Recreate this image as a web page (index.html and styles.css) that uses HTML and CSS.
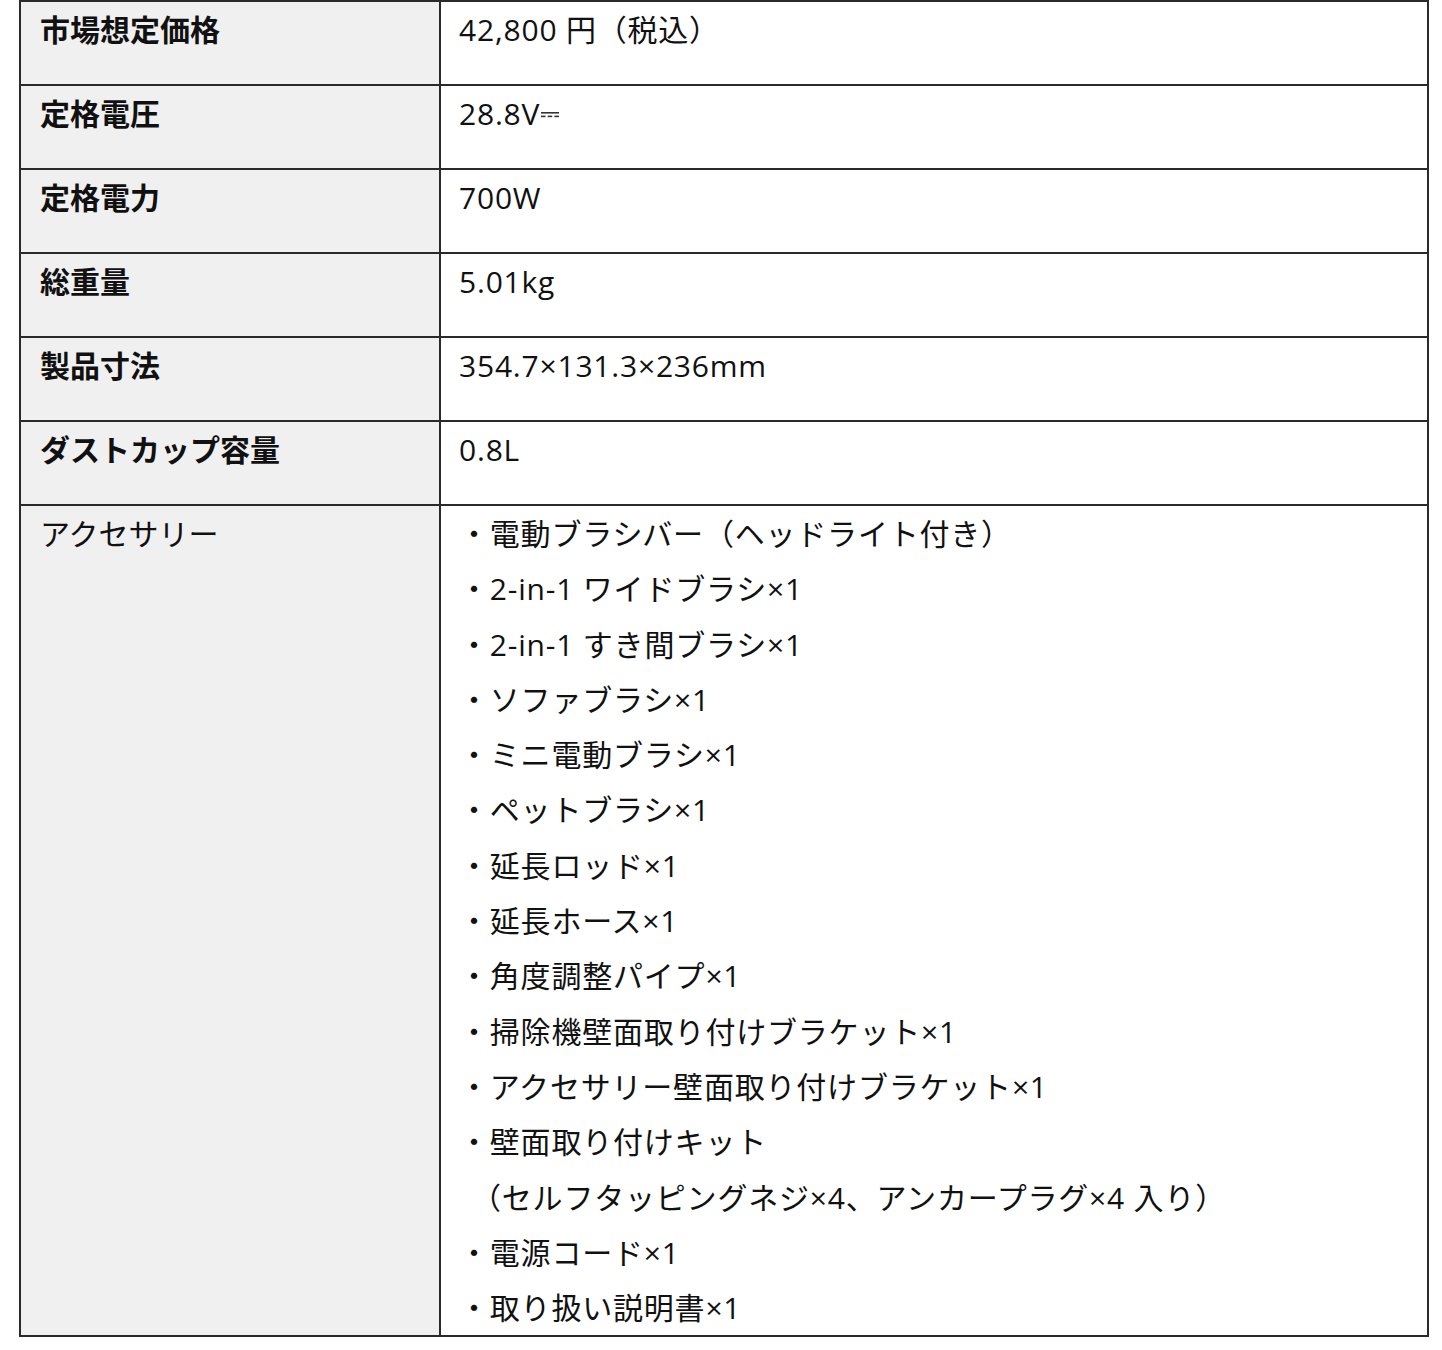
FILE: index.html
```html
<!DOCTYPE html>
<html lang="ja">
<head>
<meta charset="utf-8">
<title>仕様</title>
<link rel="stylesheet" href="styles.css">
</head>
<body>
<div class="wrap">
<table class="spec">
  <colgroup><col class="c-label"><col class="c-value"></colgroup>
  <tbody>
    <tr class="row"><th>市場想定価格</th><td>42,800 円（税込）</td></tr>
    <tr class="row"><th>定格電圧</th><td>28.8V<svg class="dc" width="18" height="6" viewBox="0 0 18 6"><rect x="0" y="0" width="18" height="1.6" fill="#333"/><rect x="0" y="3.6" width="4.5" height="1.6" fill="#333"/><rect x="6.7" y="3.6" width="4.5" height="1.6" fill="#333"/><rect x="13.4" y="3.6" width="4.6" height="1.6" fill="#333"/></svg></td></tr>
    <tr class="row"><th>定格電力</th><td>700W</td></tr>
    <tr class="row"><th>総重量</th><td>5.01kg</td></tr>
    <tr class="row"><th>製品寸法</th><td>354.7×131.3×236mm</td></tr>
    <tr class="row"><th>ダストカップ容量</th><td>0.8L</td></tr>
    <tr>
      <th class="plain">アクセサリー</th>
      <td>
        <div class="line">・電動ブラシバー（ヘッドライト付き）</div>
        <div class="line">・2-in-1 ワイドブラシ×1</div>
        <div class="line">・2-in-1 すき間ブラシ×1</div>
        <div class="line">・ソファブラシ×1</div>
        <div class="line">・ミニ電動ブラシ×1</div>
        <div class="line">・ペットブラシ×1</div>
        <div class="line">・延長ロッド×1</div>
        <div class="line">・延長ホース×1</div>
        <div class="line">・角度調整パイプ×1</div>
        <div class="line">・掃除機壁面取り付けブラケット×1</div>
        <div class="line">・アクセサリー壁面取り付けブラケット×1</div>
        <div class="line">・壁面取り付けキット</div>
        <div class="line indent">（セルフタッピングネジ×4、アンカープラグ×4 入り）</div>
        <div class="line">・電源コード×1</div>
        <div class="line">・取り扱い説明書×1</div>
      </td>
    </tr>
  </tbody>
</table>
</div>
</body>
</html>
```

FILE: styles.css
```css
html, body {
  margin: 0;
  padding: 0;
  background: #ffffff;
}

.wrap {
  padding: 0 13px 0 19px;
}

.spec {
  width: 1410px;
  border-collapse: collapse;
  table-layout: fixed;
  font-family: "Open Sans", "Noto Sans CJK JP", sans-serif;
  font-size: 30px;
  line-height: 55.3px;
  color: #111111;
}

.c-label { width: 420px; }

.spec th,
.spec td {
  border: 2px solid #2a2a2a;
  vertical-align: top;
  text-align: left;
  padding: 0 19px;
}

.spec th {
  background: #f0f0f0;
  font-weight: 700;
}

.spec th.plain {
  font-weight: 400;
}

.spec td {
  font-weight: 400;
  padding-left: 18px;
  letter-spacing: 0.8px;
}

.row {
  height: 84px;
}

.dc {
  display: inline-block;
  vertical-align: 7px;
  margin-left: 1px;
}

.indent {
  padding-left: 12px;
}
```
